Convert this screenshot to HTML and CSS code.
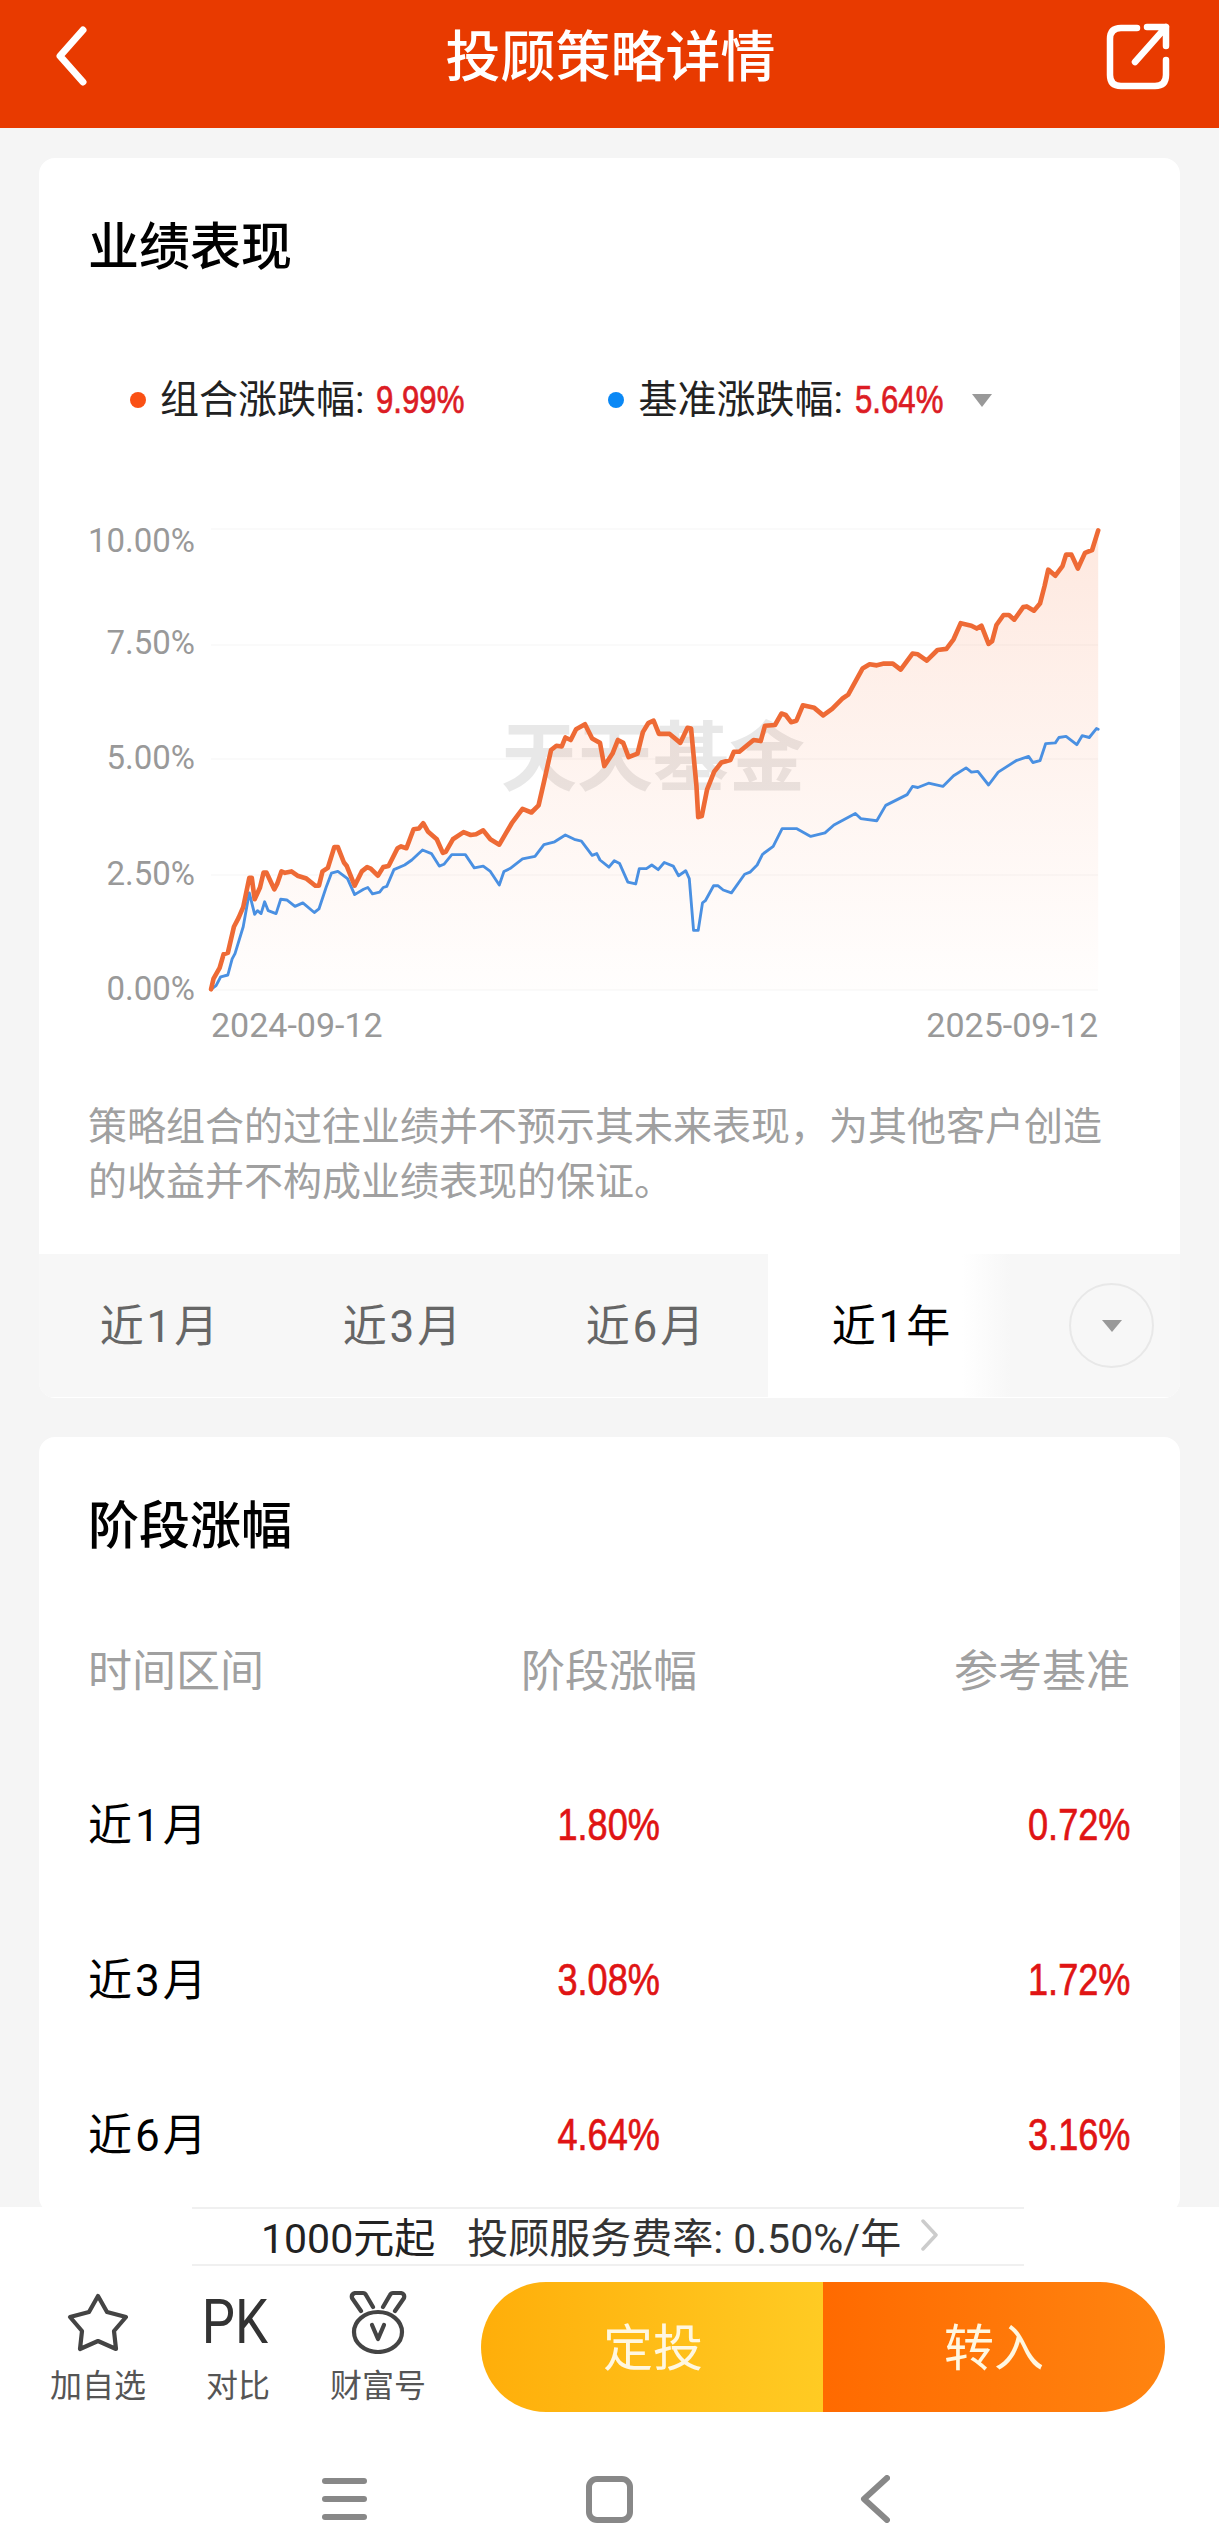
FILE: index.html
```html
<!DOCTYPE html>
<html lang="zh-CN">
<head>
<meta charset="utf-8">
<title>投顾策略详情</title>
<link rel="stylesheet" href="styles.css">
</head>
<body>
<div class="phone">
  <header class="topbar">
    <svg class="back-icon" width="34" height="60" viewBox="0 0 34 60"><polyline points="29,4 6,30 29,56"/></svg>
    <h1 class="topbar-title">投顾策略详情</h1>
    <svg class="share-icon" width="66" height="68" viewBox="0 0 66 68"><path d="M32 6H16Q5 6 5 17V53Q5 64 16 64H50Q61 64 61 53V38"/><path d="M42 5H61V24M61 5L30 40"/></svg>
  </header>

  <main class="content">
    <section class="card">
      <h2 class="card-title">业绩表现</h2>
      <div class="legend">
        <span class="dot dot-orange"></span>
        <span class="legend-label">组合涨跌幅:</span>
        <span class="legend-value">9.99%</span>
        <span class="dot dot-blue legend-second"></span>
        <span class="legend-label">基准涨跌幅:</span>
        <span class="legend-value">5.64%</span>
        <span class="legend-caret"></span>
      </div>

      <svg class="chart" viewBox="39 490 1141 570" width="1141" height="570">
        <defs>
          <linearGradient id="areaFill" gradientUnits="userSpaceOnUse" x1="0" y1="85" x2="0" y2="1372">
            <stop offset="0" stop-color="#f97a45" stop-opacity=".17"/>
            <stop offset=".6" stop-color="#f97a45" stop-opacity=".07"/>
            <stop offset="1" stop-color="#f97a45" stop-opacity=".01"/>
          </linearGradient>
        </defs>
        <g class="grid">
          <line x1="211" x2="1098" y1="529" y2="529"/>
          <line x1="211" x2="1098" y1="645" y2="645"/>
          <line x1="211" x2="1098" y1="759" y2="759"/>
          <line x1="211" x2="1098" y1="875" y2="875"/>
          <line x1="211" x2="1098" y1="990" y2="990"/>
        </g>
        <text class="watermark" x="653" y="785">天天基金</text>
        <g transform="translate(60 500) scale(.35714)">
          <polygon fill="url(#areaFill)" points="423,1370 430,1340 447,1310 458,1272 470,1268 487,1195 500,1170 513,1140 530,1058 537,1058 545,1118 560,1085 570,1043 578,1043 600,1090 608,1075 620,1040 630,1044 648,1040 665,1052 690,1060 715,1080 725,1080 735,1040 750,1030 768,972 778,972 795,1015 803,1025 825,1080 845,1040 860,1028 870,1032 890,1052 905,1028 920,1025 945,975 955,970 970,975 990,922 1005,920 1017,905 1030,928 1055,950 1072,988 1080,985 1100,950 1130,930 1150,938 1165,936 1185,925 1205,950 1230,965 1265,905 1295,865 1320,875 1340,855 1355,790 1375,700 1390,688 1405,690 1415,665 1430,672 1445,642 1470,628 1490,668 1512,680 1524,745 1547,710 1562,672 1577,680 1592,720 1617,710 1632,650 1647,625 1662,618 1677,655 1707,655 1737,680 1757,638 1767,640 1782,800 1787,888 1797,885 1812,810 1832,760 1852,735 1877,728 1887,705 1902,705 1942,672 1962,675 1974,632 2002,630 2020,598 2032,602 2047,622 2062,618 2080,575 2112,582 2137,603 2162,585 2192,555 2207,545 2247,472 2267,460 2287,463 2307,458 2332,458 2354,475 2387,430 2402,432 2427,450 2457,420 2482,417 2502,390 2522,345 2552,352 2567,360 2580,352 2600,403 2610,395 2622,350 2642,322 2657,322 2672,335 2697,300 2707,298 2727,310 2744,290 2757,240 2767,195 2787,212 2807,185 2817,153 2832,153 2850,192 2870,148 2890,140 2907,85 2907,1372 423,1372"/>
          <polyline class="line-blue" points="423,1370 437,1360 450,1335 470,1330 482,1285 490,1270 513,1195 530,1100 545,1160 553,1150 563,1158 573,1125 583,1150 605,1158 618,1118 635,1120 658,1138 680,1128 712,1155 725,1145 745,1085 760,1045 778,1040 805,1060 825,1105 850,1090 862,1085 875,1103 895,1098 905,1085 915,1082 935,1035 965,1022 985,1008 1015,980 1040,990 1062,1025 1075,1020 1097,993 1135,993 1160,1030 1185,1025 1205,1040 1230,1078 1243,1040 1260,1032 1295,1005 1330,998 1355,965 1385,957 1415,938 1440,950 1460,955 1490,995 1503,990 1512,1008 1537,1028 1552,1010 1567,1018 1590,1070 1612,1075 1622,1032 1642,1032 1657,1022 1675,1035 1692,1015 1717,1025 1732,1052 1752,1038 1762,1060 1774,1205 1787,1205 1799,1128 1807,1122 1830,1080 1842,1080 1857,1092 1880,1100 1917,1048 1932,1042 1952,1022 1967,992 1997,970 2022,920 2062,920 2102,942 2142,932 2167,910 2227,878 2242,892 2287,898 2312,855 2372,825 2387,802 2402,805 2432,793 2472,802 2502,772 2537,750 2552,762 2570,760 2600,798 2627,762 2677,730 2712,718 2724,735 2744,730 2760,682 2787,680 2797,665 2817,662 2847,685 2862,660 2882,665 2902,640 2907,642"/>
          <polyline class="line-orange" points="423,1370 430,1340 447,1310 458,1272 470,1268 487,1195 500,1170 513,1140 530,1058 537,1058 545,1118 560,1085 570,1043 578,1043 600,1090 608,1075 620,1040 630,1044 648,1040 665,1052 690,1060 715,1080 725,1080 735,1040 750,1030 768,972 778,972 795,1015 803,1025 825,1080 845,1040 860,1028 870,1032 890,1052 905,1028 920,1025 945,975 955,970 970,975 990,922 1005,920 1017,905 1030,928 1055,950 1072,988 1080,985 1100,950 1130,930 1150,938 1165,936 1185,925 1205,950 1230,965 1265,905 1295,865 1320,875 1340,855 1355,790 1375,700 1390,688 1405,690 1415,665 1430,672 1445,642 1470,628 1490,668 1512,680 1524,745 1547,710 1562,672 1577,680 1592,720 1617,710 1632,650 1647,625 1662,618 1677,655 1707,655 1737,680 1757,638 1767,640 1782,800 1787,888 1797,885 1812,810 1832,760 1852,735 1877,728 1887,705 1902,705 1942,672 1962,675 1974,632 2002,630 2020,598 2032,602 2047,622 2062,618 2080,575 2112,582 2137,603 2162,585 2192,555 2207,545 2247,472 2267,460 2287,463 2307,458 2332,458 2354,475 2387,430 2402,432 2427,450 2457,420 2482,417 2502,390 2522,345 2552,352 2567,360 2580,352 2600,403 2610,395 2622,350 2642,322 2657,322 2672,335 2697,300 2707,298 2727,310 2744,290 2757,240 2767,195 2787,212 2807,185 2817,153 2832,153 2850,192 2870,148 2890,140 2907,85"/>
        </g>
        <g class="axis-y">
          <text x="195" y="552">10.00%</text>
          <text x="195" y="654">7.50%</text>
          <text x="195" y="769">5.00%</text>
          <text x="195" y="885">2.50%</text>
          <text x="195" y="1000">0.00%</text>
        </g>
        <text class="axis-x" x="211" y="1037">2024-09-12</text>
        <text class="axis-x axis-x-end" x="1098" y="1037">2025-09-12</text>
      </svg>

      <p class="disclaimer">策略组合的过往业绩并不预示其未来表现&#65292;为其他客户创造的收益并不构成业绩表现的保证。</p>

      <div class="tabs">
        <div class="tab">近1月</div>
        <div class="tab">近3月</div>
        <div class="tab">近6月</div>
        <div class="tab tab-active">近1年</div>
        <div class="tab-more"><span class="tab-more-circle"><span class="tab-more-caret"></span></span></div>
      </div>
    </section>

    <section class="card card-returns">
      <h2 class="card-title">阶段涨幅</h2>
      <div class="returns">
        <div class="returns-head">时间区间</div>
        <div class="returns-head">阶段涨幅</div>
        <div class="returns-head">参考基准</div>

        <div class="returns-name">近1月</div>
        <div class="returns-value">1.80%</div>
        <div class="returns-value">0.72%</div>

        <div class="returns-name">近3月</div>
        <div class="returns-value">3.08%</div>
        <div class="returns-value">1.72%</div>

        <div class="returns-name">近6月</div>
        <div class="returns-value">4.64%</div>
        <div class="returns-value">3.16%</div>
      </div>
    </section>
  </main>

  <footer class="bottom">
    <div class="fee">
      <span class="fee-min">1000元起</span>
      <span class="fee-rate">投顾服务费率: 0.50%/年</span>
      <svg class="fee-arrow" width="18" height="32" viewBox="0 0 18 32"><polyline points="2,2 15,16 2,30"/></svg>
    </div>
    <div class="actions">
      <div class="tool">
        <div class="tool-icon">
          <svg class="stroke-icon" width="64" height="60" viewBox="0 0 64 60"><polygon points="32,4 41,20 60,25 48,39 50,57 32,49 14,57 16,39 4,25 23,20"/></svg>
        </div>
        <div class="tool-label">加自选</div>
      </div>
      <div class="tool">
        <div class="tool-icon tool-pk">PK</div>
        <div class="tool-label">对比</div>
      </div>
      <div class="tool">
        <div class="tool-icon">
          <svg class="stroke-icon" width="58" height="64" viewBox="0 0 58 64"><ellipse cx="29" cy="42" rx="24" ry="20"/><path d="M12 21L3 8Q2 4 6 3L14 3Q16 3 17 5L24 17"/><path d="M46 21L55 8Q56 4 52 3L44 3Q42 3 41 5L34 17"/><polyline points="23,35 29,49 35,35"/></svg>
        </div>
        <div class="tool-label">财富号</div>
      </div>
      <div class="buy">
        <div class="buy-btn buy-plan">定投</div>
        <div class="buy-btn buy-in">转入</div>
      </div>
    </div>
    <nav class="sysnav">
      <div class="sys-menu"><span></span><span></span><span></span></div>
      <div class="sys-home"></div>
      <svg class="sys-back" width="30" height="48" viewBox="0 0 30 48"><polyline points="27,3 4,24 27,45"/></svg>
    </nav>
  </footer>
</div>
</body>
</html>
```

FILE: styles.css
```css
* { box-sizing: border-box; margin: 0; padding: 0; }
html, body { width: 1219px; height: 2538px; overflow: hidden; background: #f5f5f5; }
body { font-family: Roboto, "Noto Sans CJK SC", sans-serif; color: #000; }

.phone { width: 1219px; height: 2538px; display: flex; flex-direction: column; }

/* top bar */
.topbar {
  height: 128px; flex: none; background: #e83a00;
  display: grid; grid-template-columns: 1fr auto 1fr; align-items: center;
  padding: 0 48px 16px 54px;
}
.topbar-title { font-size: 55px; font-weight: 500; line-height: 70px; color: #fff; text-align: center; padding: 2px 4px 0 0; }
.back-icon { justify-self: start; fill: none; stroke: #fff; stroke-width: 7; stroke-linecap: round; stroke-linejoin: round; }
.share-icon { justify-self: end; fill: none; stroke: #fff; stroke-width: 6.5; stroke-linecap: round; stroke-linejoin: round; }

/* scrolling content */
.content { flex: 1; min-height: 0; overflow: hidden; padding: 30px 39px 0; display: flex; flex-direction: column; gap: 39px; }
.card { flex: none; background: #fff; border-radius: 16px; overflow: hidden; padding-bottom: 1px; }
.card-returns { flex: 1 0 auto; }
.card-title { font-size: 51px; font-weight: 500; line-height: 70px; padding: 55px 0 0 49px; height: 122px; }

/* legend */
.legend { display: flex; align-items: center; height: 50px; margin-top: 95px; padding-left: 91px; }
.dot { width: 16px; height: 16px; border-radius: 50%; margin-right: 14px; }
.dot-orange { background: #fa5014; }
.dot-blue { background: #0a88f5; }
.legend-second { margin-left: 144px; }
.legend-label { font-size: 39px; line-height: 50px; color: #222; margin-right: 12px; }
.legend-value {
  display: inline-block; width: 88px; white-space: nowrap;
  font-family: "Liberation Sans", sans-serif; font-size: 38px; line-height: 50px; color: #dc1c24;
  transform: scaleX(.82); transform-origin: left center;
  -webkit-text-stroke: .7px #dc1c24;
}
.legend-caret { margin-left: 29px; border-left: 10px solid transparent; border-right: 10px solid transparent; border-top: 13px solid #999; }

/* chart */
.chart { display: block; margin-top: 65px; }
.grid line { stroke: #fafafa; stroke-width: 2; }
.watermark { font-family: "Noto Sans CJK SC", sans-serif; font-size: 76px; font-weight: 700; fill: #e8e8e8; text-anchor: middle; }
.line-orange { fill: none; stroke: #ee6a35; stroke-width: 13; stroke-linejoin: round; stroke-linecap: round; }
.line-blue { fill: none; stroke: #4a90e2; stroke-width: 8; stroke-linejoin: round; stroke-linecap: round; }
.axis-y text { font-size: 33px; fill: #999; text-anchor: end; }
.axis-x { font-size: 34px; fill: #999; }
.axis-x-end { text-anchor: end; }

.disclaimer { font-size: 39px; line-height: 55px; color: #a0a0a0; padding: 40px 60px 44px 49px; }

/* period tabs */
.tabs { display: flex; height: 143px; background: #f7f7f7; }
.tab { width: 243px; display: flex; align-items: center; justify-content: center; font-size: 44px; letter-spacing: 3px; color: #666; padding-bottom: 5px; }
.tab-active { color: #000; background: linear-gradient(to right, #fff 0, #fff 80%, #f7f7f7 100%); padding-left: 6px; }
.tab-more { flex: 1; display: flex; align-items: center; justify-content: flex-end; padding-right: 26px; }
.tab-more-circle { width: 85px; height: 85px; border-radius: 50%; border: 2px solid #e8e8e8; display: flex; align-items: center; justify-content: center; }
.tab-more-caret { border-left: 10px solid transparent; border-right: 10px solid transparent; border-top: 12px solid #999; }

/* returns table */
.returns { display: grid; grid-template-columns: 1fr 1fr 1fr; grid-template-rows: 150px 155px 155px 155px; margin-top: 38px; padding: 0 50px 0 49px; align-items: center; }
.returns-head { font-size: 44px; line-height: 155px; color: #a0a0a0; height: 155px; }
.returns-name { font-size: 44px; letter-spacing: 3px; color: #000; padding-bottom: 5px; }
.returns-value { font-family: "Liberation Sans", sans-serif; font-size: 44px; color: #e01414; transform: scaleX(.82); -webkit-text-stroke: .7px #e01414; }
.returns > :nth-child(3n+2) { text-align: center; }
.returns > :nth-child(3n) { text-align: right; transform-origin: right center; }

/* bottom */
.bottom { flex: none; height: 331px; background: #fff; display: flex; flex-direction: column; }
.fee {
  width: 832px; height: 59px; margin-left: 192px;
  border-top: 2px solid #f0f0f0; border-bottom: 2px solid #f0f0f0;
  display: flex; align-items: center; padding-left: 69px; padding-bottom: 3px;
  font-size: 41px; color: #333;
}
.fee-min { margin-right: 32px; color: #222; }
.fee-rate { margin-right: 20px; }
.fee-arrow { fill: none; stroke: #ccc; stroke-width: 3.5; stroke-linecap: round; stroke-linejoin: round; }

.actions { display: flex; align-items: flex-start; padding: 16px 54px 0 28px; }
.tool { width: 140px; margin-top: 6px; display: flex; flex-direction: column; align-items: center; }
.tool-icon { height: 68px; display: flex; align-items: center; justify-content: center; }
.tool-pk { font-size: 62px; font-weight: 400; line-height: 68px; color: #333; transform: scaleX(.85); margin-right: 5px; }
.tool-label { font-size: 32px; line-height: 40px; margin-top: 10px; color: #555; }
.stroke-icon { fill: none; stroke: #444; stroke-width: 4.2; stroke-linejoin: round; stroke-linecap: round; }

.buy { flex: 1; margin-left: 33px; height: 130px; display: flex; border-radius: 65px; overflow: hidden; }
.buy-btn { display: flex; align-items: center; justify-content: center; font-size: 50px; color: #fff7e0; padding-bottom: 6px; }
.buy-plan { width: 342px; background: linear-gradient(to right, #ffae0a, #ffcb23); padding-left: 2px; }
.buy-in { flex: 1; background: linear-gradient(to right, #ff6a00, #ff8410); }

/* system nav */
.sysnav { flex: none; display: grid; grid-template-columns: repeat(3, 265px); justify-content: center; justify-items: center; align-items: center; padding-top: 48px; height: 126px; }
.sys-menu { width: 45px; height: 42px; display: flex; flex-direction: column; justify-content: space-between; }
.sys-menu span { height: 6px; border-radius: 3px; background: #888; }
.sys-home { width: 47px; height: 47px; border: 6px solid #888; border-radius: 11px; }
.sys-back { fill: none; stroke: #888; stroke-width: 6; stroke-linecap: round; stroke-linejoin: round; }
```
